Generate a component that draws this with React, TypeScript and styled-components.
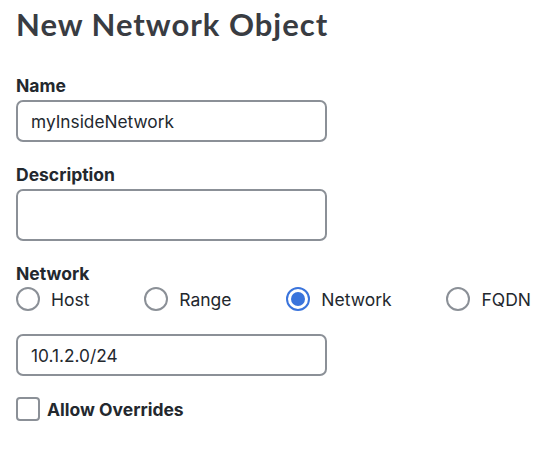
import React, { useState } from "react";
import styled, { createGlobalStyle } from "styled-components";

const GlobalStyle = createGlobalStyle`
  body {
    margin: 0;
    background: #ffffff;
    font-family: Inter, "Noto Sans", sans-serif;
    color: #23282e;
  }
`;

const Page = styled.div`
  padding: 6px 17px 0 16px;
  width: 548px;
  box-sizing: border-box;
`;

const Title = styled.h1`
  margin: 0 0 33px 0;
  font-family: Lato, Inter, sans-serif;
  font-size: 31px;
  line-height: 37px;
  font-weight: 700;
  color: #393c42;
  letter-spacing: 1px;
`;

const Field = styled.div<{ $gap?: number }>`
  display: flex;
  flex-direction: column;
  margin-bottom: ${(p) => p.$gap ?? 23}px;
`;

const Label = styled.label`
  font-size: 17.5px;
  font-weight: 700;
  color: #23282e;
  line-height: 20px;
  margin-bottom: 4px;
`;

const TextInput = styled.input<{ $tall?: boolean }>`
  width: 311px;
  height: ${(p) => (p.$tall ? 52 : 42)}px;
  box-sizing: border-box;
  border: 2px solid #8b9097;
  border-radius: 7px;
  padding: 0 13px;
  font-family: Inter, sans-serif;
  font-size: 17.3px;
  color: #23282e;
  outline: none;
  background: #fff;
`;

const RadioRow = styled.div`
  display: flex;
  justify-content: space-between;
  width: 515px;
  margin: 3px 0 23px 0;
`;

const RadioItem = styled.label`
  display: flex;
  align-items: center;
  gap: 11px;
  font-size: 17.5px;
  color: #23282e;
  cursor: pointer;
`;

const Circle = styled.span<{ $checked?: boolean }>`
  width: 24px;
  height: 24px;
  box-sizing: border-box;
  border-radius: 50%;
  border: 2px solid ${(p) => (p.$checked ? "#3a74dc" : "#8b9097")};
  display: flex;
  align-items: center;
  justify-content: center;

  &::after {
    content: "";
    width: 14px;
    height: 14px;
    border-radius: 50%;
    background: #3a74dc;
    display: ${(p) => (p.$checked ? "block" : "none")};
  }
`;

const CheckRow = styled.label`
  display: flex;
  align-items: center;
  gap: 7px;
  font-size: 17.5px;
  font-weight: 700;
  color: #23282e;
  margin-top: 1px;
`;

const Box = styled.span`
  width: 24px;
  height: 24px;
  box-sizing: border-box;
  border: 2px solid #8b9097;
  border-radius: 4px;
`;

const options = ["Host", "Range", "Network", "FQDN"];

export default function App() {
  const [type, setType] = useState("Network");
  return (
    <Page>
      <GlobalStyle />
      <Title>New Network Object</Title>
      <Field>
        <Label>Name</Label>
        <TextInput defaultValue="myInsideNetwork" />
      </Field>
      <Field>
        <Label>Description</Label>
        <TextInput $tall />
      </Field>
      <Label>Network</Label>
      <RadioRow>
        {options.map((o) => (
          <RadioItem key={o} onClick={() => setType(o)}>
            <Circle $checked={type === o} />
            {o}
          </RadioItem>
        ))}
      </RadioRow>
      <Field $gap={21}>
        <TextInput defaultValue="10.1.2.0/24" />
      </Field>
      <CheckRow>
        <Box />
        Allow Overrides
      </CheckRow>
    </Page>
  );
}
